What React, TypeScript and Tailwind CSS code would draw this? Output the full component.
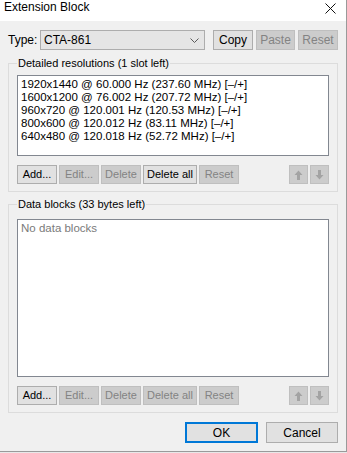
import React from 'react';

type BtnProps = {
  label?: string;
  disabled?: boolean;
  className?: string;
  children?: React.ReactNode;
};

function Btn({ label, disabled, className, children }: BtnProps) {
  const tone = disabled
    ? 'border-[#bfbfbf] bg-[#cccccc] text-[#838383]'
    : 'border-[#adadad] bg-[#e1e1e1] text-black';
  return (
    <div className={`flex shrink-0 items-center justify-center border text-[11px] leading-none ${tone} ${className ?? ''}`}>
      {children ?? label}
    </div>
  );
}

function Arrow({ down }: { down?: boolean }) {
  return (
    <svg width="9" height="10" viewBox="0 0 9 10" className={down ? 'rotate-180' : ''}>
      <polygon points="4.5,0.5 8.5,5 6,5 6,10 3,10 3,5 0.5,5" fill="#a3a3a3" />
    </svg>
  );
}

function ButtonRow({ deleteAllEnabled }: { deleteAllEnabled?: boolean }) {
  return (
    <div className="mt-[9px] flex h-[19px] items-stretch">
      <div className="flex gap-[2px]">
        <Btn label="Add..." className="w-[40px] text-[11.5px]" />
        <Btn label="Edit..." disabled className="w-[40px] text-[11.5px]" />
        <Btn label="Delete" disabled className="w-[40px] text-[11.5px]" />
        <Btn label="Delete all" disabled={!deleteAllEnabled} className="w-[54px] text-[11.5px]" />
        <Btn label="Reset" disabled className="w-[40px] text-[11.5px]" />
      </div>
      <div className="ml-auto flex gap-[2px]">
        <Btn disabled className="w-[19px]">
          <Arrow />
        </Btn>
        <Btn disabled className="w-[19px]">
          <Arrow down />
        </Btn>
      </div>
    </div>
  );
}

const resolutions = [
  '1920x1440 @ 60.000 Hz (237.60 MHz) [–/+]',
  '1600x1200 @ 76.002 Hz (207.72 MHz) [–/+]',
  '960x720 @ 120.001 Hz (120.53 MHz) [–/+]',
  '800x600 @ 120.012 Hz (83.11 MHz) [–/+]',
  '640x480 @ 120.018 Hz (52.72 MHz) [–/+]',
];

export default function App() {
  return (
    <div className="h-[453px] w-[347px] bg-[#e8e8e8] font-['Liberation_Sans',Arial,sans-serif] text-[11px] text-black">
      <div className="flex h-[452px] flex-col border-r border-b border-[#9a9a9a] bg-[#f0f0f0]">
        {/* Title bar */}
        <div className="flex h-[21px] items-start bg-white pl-[4px] pr-[10px]">
          <span className="mt-[1px] text-[12px] leading-[13px]">Extension Block</span>
          <svg width="11" height="11" viewBox="0 0 11 11" className="ml-auto mt-[3px]">
            <path d="M0.5 0.5 L10.5 10.5 M10.5 0.5 L0.5 10.5" stroke="#111" strokeWidth="1" />
          </svg>
        </div>

        <div className="flex flex-1 flex-col px-[8px]">
          {/* Type row */}
          <div className="mt-[9px] flex h-[20px] items-stretch">
            <span className="flex w-[32px] items-center text-[12px]">Type:</span>
            <div className="flex w-[165px] items-center border border-[#adadad] bg-[#e5e5e5] pl-[3px] pr-[5px] text-[12px]">
              <span>CTA-861</span>
              <svg width="9" height="5" viewBox="0 0 9 5" className="ml-auto">
                <path d="M0.5 0.5 L4.5 4.5 L8.5 0.5" fill="none" stroke="#5a5a5a" strokeWidth="1" />
              </svg>
            </div>
            <Btn label="Copy" className="ml-[8px] w-[40px] text-[12px]" />
            <Btn label="Paste" disabled className="ml-[3px] w-[39px] text-[12px]" />
            <Btn label="Reset" disabled className="ml-[3px] w-[40px] text-[12px]" />
          </div>

          {/* Detailed resolutions */}
          <fieldset className="mt-[7px] border border-[#dcdcdc] px-[8px] pt-[6px] pb-[7px]">
            <legend className="px-[1px] leading-[12px]">Detailed resolutions (1 slot left)</legend>
            <div className="h-[81px] border border-[#828790] bg-white pt-[2px] pl-[3px] text-[11.5px]">
              {resolutions.map((r) => (
                <div key={r} className="leading-[13px]">
                  {r}
                </div>
              ))}
            </div>
            <ButtonRow deleteAllEnabled />
          </fieldset>

          {/* Data blocks */}
          <fieldset className="mt-[6px] border border-[#dcdcdc] px-[8px] pt-[9px] pb-[7px]">
            <legend className="px-[1px] leading-[12px]">Data blocks (33 bytes left)</legend>
            <div className="h-[158px] border border-[#828790] bg-white pt-[2px] pl-[3px] text-[11.5px]">
              <div className="leading-[13px] text-[#7a7a7a]">No data blocks</div>
            </div>
            <ButtonRow />
          </fieldset>

          {/* Footer */}
          <div className="mt-[9px] flex justify-end gap-[8px]">
            <div className="flex h-[21px] w-[73px] items-center justify-center border-2 border-[#0078d7] bg-[#e1e1e1] text-[12px]">
              OK
            </div>
            <Btn label="Cancel" className="h-[21px] w-[72px] text-[12px]" />
          </div>
        </div>
      </div>
    </div>
  );
}
